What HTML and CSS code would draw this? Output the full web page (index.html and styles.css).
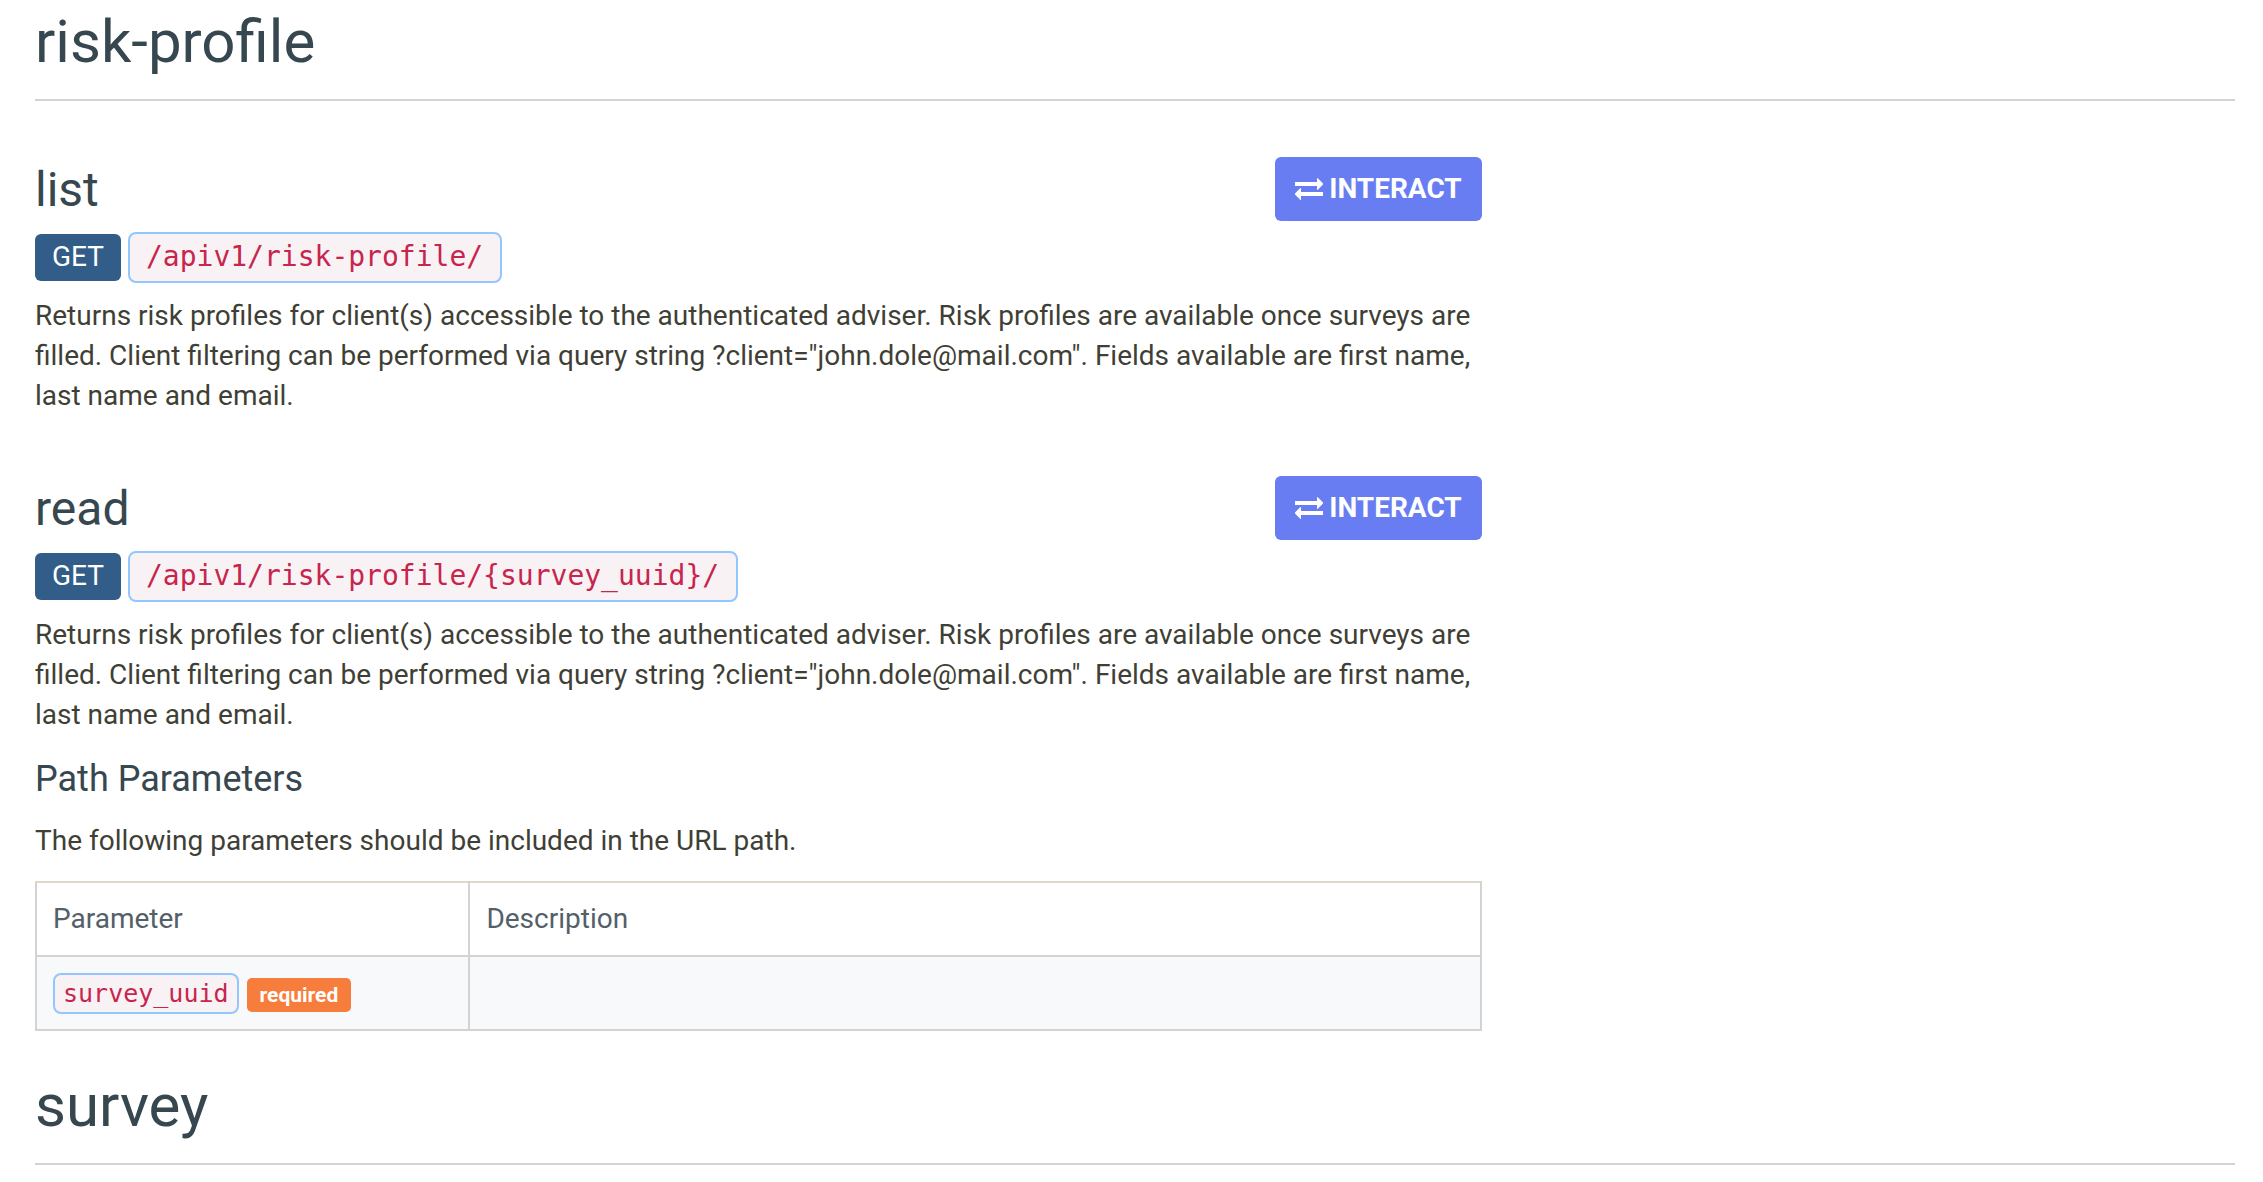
FILE: index.html
```html
<!DOCTYPE html>
<html lang="en">
<head>
<meta charset="utf-8">
<title>API documentation</title>
<link rel="stylesheet" href="styles.css">
</head>
<body>
<main class="page">
  <section>
    <h1 class="section-title">risk-profile</h1>
    <article class="endpoint">
      <header class="endpoint-head">
        <h2>list</h2>
        <button class="interact" type="button">
          <svg class="icon" viewBox="0 0 28 22" aria-hidden="true"><path d="M0 4h22V.6q0-.9.8-.3l5 4.900q.5.800 0 1.600l-5 4.900q-.8.500-.8-.3V8H0zM28 18H6v3.400q0 .9-.8.300l-5-4.900q-.5-.8 0-1.600l5-4.900q.8-.5.8.300V14h22z"/></svg>
          INTERACT
        </button>
      </header>
      <div class="route"><span class="method">GET</span><code class="path">/apiv1/risk-profile/</code></div>
      <p>Returns risk profiles for client(s) accessible to the authenticated adviser. Risk profiles are available once surveys are filled. Client filtering can be performed via query string ?client="john.dole@mail.com". Fields available are first name, last name and email.</p>
    </article>
    <article class="endpoint">
      <header class="endpoint-head">
        <h2>read</h2>
        <button class="interact" type="button">
          <svg class="icon" viewBox="0 0 28 22" aria-hidden="true"><path d="M0 4h22V.6q0-.9.8-.3l5 4.900q.5.800 0 1.600l-5 4.900q-.8.500-.8-.3V8H0zM28 18H6v3.400q0 .9-.8.300l-5-4.900q-.5-.8 0-1.600l5-4.900q.8-.5.8.300V14h22z"/></svg>
          INTERACT
        </button>
      </header>
      <div class="route"><span class="method">GET</span><code class="path">/apiv1/risk-profile/{survey_uuid}/</code></div>
      <p>Returns risk profiles for client(s) accessible to the authenticated adviser. Risk profiles are available once surveys are filled. Client filtering can be performed via query string ?client="john.dole@mail.com". Fields available are first name, last name and email.</p>
      <h3>Path Parameters</h3>
      <p>The following parameters should be included in the URL path.</p>
      <table class="params">
        <thead>
          <tr><th scope="col">Parameter</th><th scope="col">Description</th></tr>
        </thead>
        <tbody>
          <tr><td><div class="param"><code class="name">survey_uuid</code><span class="label">required</span></div></td><td></td></tr>
        </tbody>
      </table>
    </article>
  </section>
  <section>
    <h1 class="section-title">survey</h1>
  </section>
</main>
</body>
</html>
```
FILE: styles.css
```css
* { box-sizing: border-box; }

body {
  margin: 0;
  background: #fff;
  color: #403f36;
  font: 28px/40px Roboto, sans-serif;
}

.page { padding: 9px 28px 0 35px; }

h1, h2, h3 {
  margin: 0;
  color: #37474f;
  font-weight: 400;
}

.section-title {
  margin-bottom: 16px;
  padding-bottom: 24px;
  border-bottom: 2px solid #d3d3d3;
  font-size: 60px;
  line-height: 66px;
}

.endpoint {
  width: calc(66.667% - 20px);
  padding-top: 40px;
}

.endpoint-head {
  display: flex;
  justify-content: space-between;
  height: 64px;
}

h2 { font-size: 48px; line-height: 66px; }

.interact {
  display: flex;
  align-items: center;
  gap: 6px;
  height: 64px;
  padding: 0 20px;
  border: 0;
  border-radius: 6px;
  background: #687df1;
  color: #fff;
  font: 700 28px/40px Roboto, sans-serif;
}

.icon { width: 28px; height: 22px; fill: currentColor; }

.route {
  display: flex;
  align-items: center;
  gap: 7px;
  margin: 11px 0 13px;
}

.method {
  padding: 3px 17px 4px;
  border-radius: 6px;
  background: #325d88;
  color: #fff;
}

code {
  border: 2px solid #93c5ff;
  border-radius: 8px;
  background: #f9f2f4;
  color: #c7254e;
  font-family: "DejaVu Sans Mono", monospace;
}

.path { padding: 3px 17px 4px 16px; font-size: 28px; }

p { margin: 0 0 20px; }

h3 {
  margin: 22px 0 20px;
  font-size: 36px;
  line-height: 44px;
}

.params {
  width: 100%;
  margin-bottom: 42px;
  border-collapse: collapse;
  table-layout: fixed;
}

.params th, .params td {
  height: 74px;
  padding: 0 16px;
  border: 2px solid #d3d3d3;
  text-align: left;
}

.params th {
  border-top-color: #dfd7ca;
  color: #546068;
  font-weight: 400;
}

.params th:first-child { width: 30%; }
.params td { background: #f8f9fb; }

.param { display: flex; align-items: center; gap: 8px; }

.name { padding: 0 8px; font-size: 25px; line-height: 37px; }

.label {
  margin-top: 4px;
  padding: 0 13px;
  border-radius: 5px;
  background: #f67d3c;
  color: #fff;
  font-size: 21px;
  font-weight: 700;
  line-height: 34px;
}
```
